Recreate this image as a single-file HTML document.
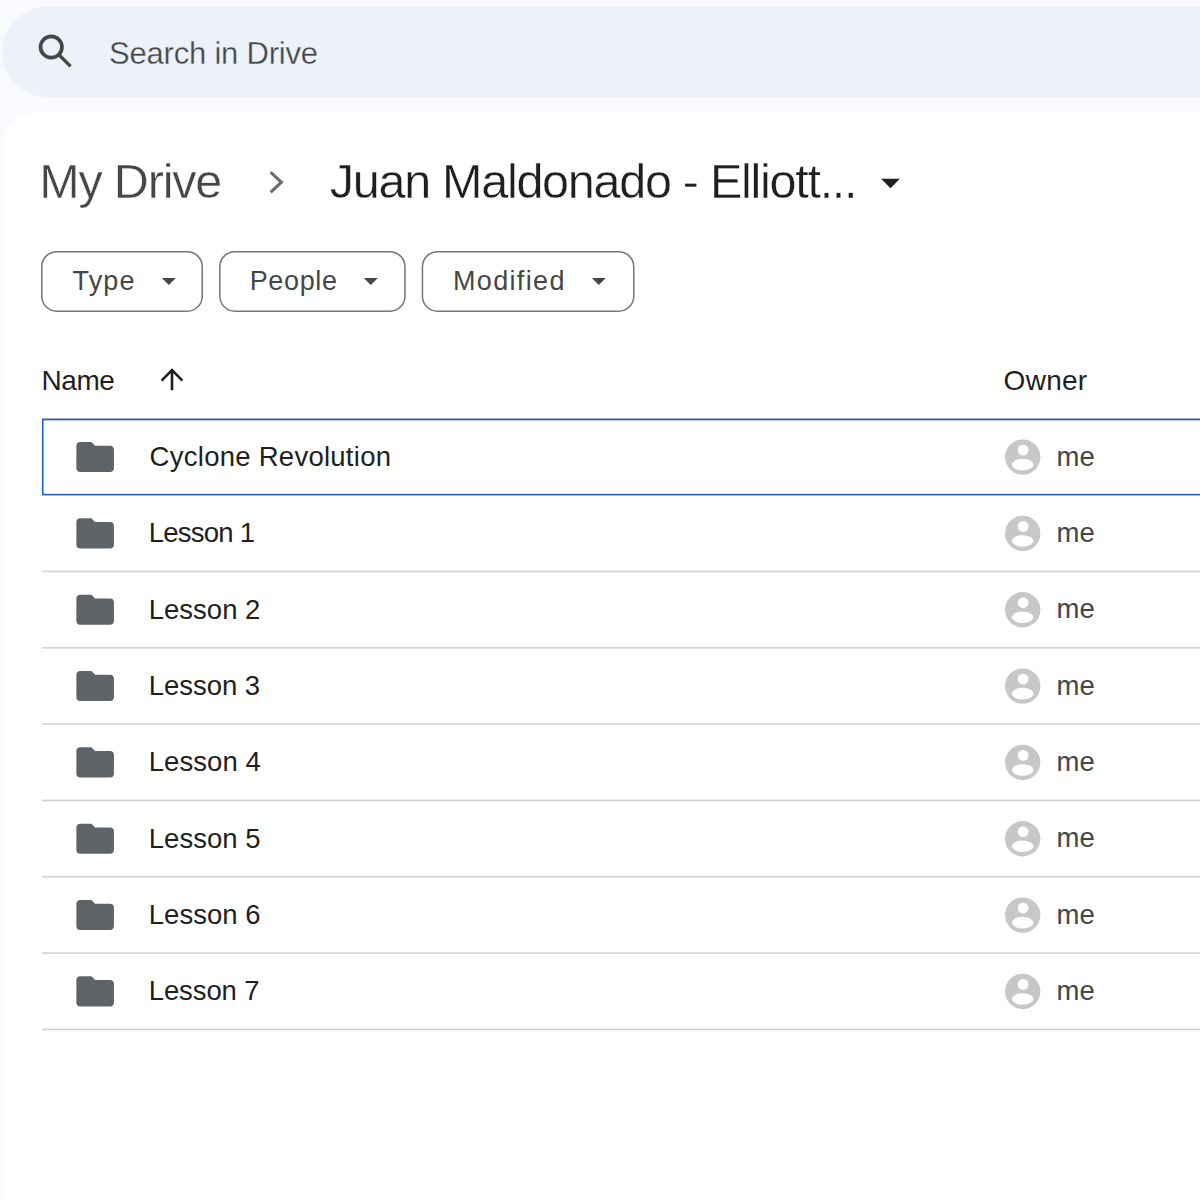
<!DOCTYPE html>
<html><head><meta charset="utf-8">
<style>
html,body{margin:0;padding:0;}
body{width:1200px;height:1200px;overflow:hidden;background:#f8fafd;position:relative;font-family:"Liberation Sans",sans-serif;}
.t{position:absolute;white-space:nowrap;line-height:1;}
.abs{position:absolute;}
</style></head><body>
<div class="abs" style="left:2px;top:7px;width:1300px;height:90px;border-radius:45px;background:#ecf1fa;"></div>
<svg class="abs" style="left:0px;top:0px" width="100" height="100" viewBox="0 0 100 100"><circle cx="51.25" cy="47.0" r="10.7" stroke="#444746" stroke-width="3.7" fill="none"/><path d="M59.2 55.0 L70.6 66.4" stroke="#444746" stroke-width="3.3" fill="none"/></svg>
<div class="t" style="left:109.12px;top:37.86px;font-size:31px;color:#444746;letter-spacing:-0.216px;-webkit-text-stroke:0.3px #ecf1fa;">Search in Drive</div>
<div class="abs" style="left:2.5px;top:113.3px;width:1300px;height:1200px;border-radius:30px 0 0 0;background:#fff;"></div>
<div class="t" style="left:39.30px;top:156.84px;font-size:48.5px;color:#444746;letter-spacing:-1.193px;-webkit-text-stroke:0.4px #fff;">My Drive</div>
<svg class="abs" style="left:250px;top:160px" width="50" height="50" viewBox="250 160 50 50"><path d="M270.6 172.2 L281.4 182.25 L270.6 192.3" stroke="#6e6e6e" stroke-width="3.1" fill="none" stroke-linejoin="miter"/></svg>
<div class="t" style="left:329.75px;top:156.94px;font-size:48.5px;color:#1f1f1f;letter-spacing:-1.269px;-webkit-text-stroke:0.4px #fff;">Juan Maldonado - Elliott...</div>
<svg class="abs" style="left:868px;top:160px" width="45" height="45" viewBox="0 0 24 24"><path fill="#1f1f1f" d="M7 10l5 5 5-5z"/></svg>
<div class="t" style="left:72.62px;top:267.94px;font-size:27px;color:#444746;letter-spacing:1.083px;">Type</div>
<svg class="abs" style="left:151.95px;top:264.10px" width="33.6" height="33.6" viewBox="0 0 24 24"><path fill="#444746" d="M7 10l5 5 5-5z"/></svg>
<div class="t" style="left:249.75px;top:267.94px;font-size:27px;color:#444746;letter-spacing:0.615px;">People</div>
<svg class="abs" style="left:353.90px;top:264.10px" width="33.6" height="33.6" viewBox="0 0 24 24"><path fill="#444746" d="M7 10l5 5 5-5z"/></svg>
<div class="t" style="left:453.00px;top:267.94px;font-size:27px;color:#444746;letter-spacing:1.336px;">Modified</div>
<svg class="abs" style="left:581.50px;top:264.10px" width="33.6" height="33.6" viewBox="0 0 24 24"><path fill="#444746" d="M7 10l5 5 5-5z"/></svg>
<div class="t" style="left:41.45px;top:367.20px;font-size:28px;color:#1f1f1f;letter-spacing:-0.417px;">Name</div>
<svg class="abs" style="left:150px;top:360px" width="40" height="40" viewBox="150 360 40 40"><path d="M161.6 380.6 L172 370.2 L182.4 380.6 M172 370.2 V390.3" stroke="#1f1f1f" stroke-width="2.6" fill="none"/></svg>
<div class="t" style="left:1003.62px;top:366.90px;font-size:28px;color:#1f1f1f;letter-spacing:0.269px;">Owner</div>
<div class="abs" style="left:42px;top:417.7px;width:1300px;height:1.3px;background:#cfcfcf;"></div>
<svg class="abs" style="left:0px;top:413.33px" width="1200" height="86.33"><rect x="42.75" y="6.55" width="1300" height="75.08" fill="none" stroke="#1f5fd6" stroke-width="1.6"/></svg>
<div class="t" style="left:149.62px;top:443.02px;font-size:27.5px;color:#1f1f1f;letter-spacing:0.262px;">Cyclone Revolution</div>
<div class="t" style="left:1056.42px;top:442.52px;font-size:27.5px;color:#444746;letter-spacing:0.175px;">me</div>
<svg class="abs" style="left:0px;top:568px" width="1200" height="6"><rect x="42" y="2.60" width="1200" height="1.7" fill="#d4d4d4"/></svg>
<div class="t" style="left:148.75px;top:519.35px;font-size:27.5px;color:#1f1f1f;letter-spacing:-0.768px;">Lesson 1</div>
<div class="t" style="left:1056.42px;top:518.85px;font-size:27.5px;color:#444746;letter-spacing:0.175px;">me</div>
<svg class="abs" style="left:0px;top:644px" width="1200" height="6"><rect x="42" y="2.93" width="1200" height="1.7" fill="#d4d4d4"/></svg>
<div class="t" style="left:148.75px;top:595.68px;font-size:27.5px;color:#1f1f1f;letter-spacing:0.000px;">Lesson 2</div>
<div class="t" style="left:1056.42px;top:595.18px;font-size:27.5px;color:#444746;letter-spacing:0.175px;">me</div>
<svg class="abs" style="left:0px;top:721px" width="1200" height="6"><rect x="42" y="2.26" width="1200" height="1.7" fill="#d4d4d4"/></svg>
<div class="t" style="left:148.75px;top:672.02px;font-size:27.5px;color:#1f1f1f;letter-spacing:-0.036px;">Lesson 3</div>
<div class="t" style="left:1056.42px;top:671.52px;font-size:27.5px;color:#444746;letter-spacing:0.175px;">me</div>
<svg class="abs" style="left:0px;top:797px" width="1200" height="6"><rect x="42" y="2.60" width="1200" height="1.7" fill="#d4d4d4"/></svg>
<div class="t" style="left:148.75px;top:748.35px;font-size:27.5px;color:#1f1f1f;letter-spacing:0.054px;">Lesson 4</div>
<div class="t" style="left:1056.42px;top:747.85px;font-size:27.5px;color:#444746;letter-spacing:0.175px;">me</div>
<svg class="abs" style="left:0px;top:873px" width="1200" height="6"><rect x="42" y="2.93" width="1200" height="1.7" fill="#d4d4d4"/></svg>
<div class="t" style="left:148.75px;top:824.68px;font-size:27.5px;color:#1f1f1f;letter-spacing:0.021px;">Lesson 5</div>
<div class="t" style="left:1056.42px;top:824.18px;font-size:27.5px;color:#444746;letter-spacing:0.175px;">me</div>
<svg class="abs" style="left:0px;top:950px" width="1200" height="6"><rect x="42" y="2.26" width="1200" height="1.7" fill="#d4d4d4"/></svg>
<div class="t" style="left:148.75px;top:901.02px;font-size:27.5px;color:#1f1f1f;letter-spacing:0.021px;">Lesson 6</div>
<div class="t" style="left:1056.42px;top:900.52px;font-size:27.5px;color:#444746;letter-spacing:0.175px;">me</div>
<svg class="abs" style="left:0px;top:1026px" width="1200" height="6"><rect x="42" y="2.59" width="1200" height="1.7" fill="#d4d4d4"/></svg>
<div class="t" style="left:148.75px;top:977.35px;font-size:27.5px;color:#1f1f1f;letter-spacing:-0.107px;">Lesson 7</div>
<div class="t" style="left:1056.42px;top:976.85px;font-size:27.5px;color:#444746;letter-spacing:0.175px;">me</div>
<svg class="abs" style="left:0;top:0" width="1200" height="1200"><rect x="41.75" y="251.75" width="160.50" height="59.4" rx="15" fill="none" stroke="#747775" stroke-width="1.5"/><rect x="219.85" y="251.75" width="185.10" height="59.4" rx="15" fill="none" stroke="#747775" stroke-width="1.5"/><rect x="422.45" y="251.75" width="211.30" height="59.4" rx="15" fill="none" stroke="#747775" stroke-width="1.5"/><path transform="translate(72.6 434.50) scale(1.879)" fill="#5f6368" d="M10 4H4c-1.1 0-1.99.9-1.99 2L2 18c0 1.1.9 2 2 2h16c1.1 0 2-.9 2-2V8c0-1.1-.9-2-2-2h-8l-2-2z"/><g transform="translate(1004 438.10)"><circle cx="18.7" cy="19" r="17.7" fill="#c7c7c7"/><circle cx="19.1" cy="12.0" r="5.4" fill="#fff"/><ellipse cx="18.7" cy="26.5" rx="10.8" ry="5.8" fill="#fff"/></g><path transform="translate(72.6 510.83) scale(1.879)" fill="#5f6368" d="M10 4H4c-1.1 0-1.99.9-1.99 2L2 18c0 1.1.9 2 2 2h16c1.1 0 2-.9 2-2V8c0-1.1-.9-2-2-2h-8l-2-2z"/><g transform="translate(1004 514.43)"><circle cx="18.7" cy="19" r="17.7" fill="#c7c7c7"/><circle cx="19.1" cy="12.0" r="5.4" fill="#fff"/><ellipse cx="18.7" cy="26.5" rx="10.8" ry="5.8" fill="#fff"/></g><path transform="translate(72.6 587.16) scale(1.879)" fill="#5f6368" d="M10 4H4c-1.1 0-1.99.9-1.99 2L2 18c0 1.1.9 2 2 2h16c1.1 0 2-.9 2-2V8c0-1.1-.9-2-2-2h-8l-2-2z"/><g transform="translate(1004 590.76)"><circle cx="18.7" cy="19" r="17.7" fill="#c7c7c7"/><circle cx="19.1" cy="12.0" r="5.4" fill="#fff"/><ellipse cx="18.7" cy="26.5" rx="10.8" ry="5.8" fill="#fff"/></g><path transform="translate(72.6 663.50) scale(1.879)" fill="#5f6368" d="M10 4H4c-1.1 0-1.99.9-1.99 2L2 18c0 1.1.9 2 2 2h16c1.1 0 2-.9 2-2V8c0-1.1-.9-2-2-2h-8l-2-2z"/><g transform="translate(1004 667.10)"><circle cx="18.7" cy="19" r="17.7" fill="#c7c7c7"/><circle cx="19.1" cy="12.0" r="5.4" fill="#fff"/><ellipse cx="18.7" cy="26.5" rx="10.8" ry="5.8" fill="#fff"/></g><path transform="translate(72.6 739.83) scale(1.879)" fill="#5f6368" d="M10 4H4c-1.1 0-1.99.9-1.99 2L2 18c0 1.1.9 2 2 2h16c1.1 0 2-.9 2-2V8c0-1.1-.9-2-2-2h-8l-2-2z"/><g transform="translate(1004 743.43)"><circle cx="18.7" cy="19" r="17.7" fill="#c7c7c7"/><circle cx="19.1" cy="12.0" r="5.4" fill="#fff"/><ellipse cx="18.7" cy="26.5" rx="10.8" ry="5.8" fill="#fff"/></g><path transform="translate(72.6 816.16) scale(1.879)" fill="#5f6368" d="M10 4H4c-1.1 0-1.99.9-1.99 2L2 18c0 1.1.9 2 2 2h16c1.1 0 2-.9 2-2V8c0-1.1-.9-2-2-2h-8l-2-2z"/><g transform="translate(1004 819.76)"><circle cx="18.7" cy="19" r="17.7" fill="#c7c7c7"/><circle cx="19.1" cy="12.0" r="5.4" fill="#fff"/><ellipse cx="18.7" cy="26.5" rx="10.8" ry="5.8" fill="#fff"/></g><path transform="translate(72.6 892.49) scale(1.879)" fill="#5f6368" d="M10 4H4c-1.1 0-1.99.9-1.99 2L2 18c0 1.1.9 2 2 2h16c1.1 0 2-.9 2-2V8c0-1.1-.9-2-2-2h-8l-2-2z"/><g transform="translate(1004 896.09)"><circle cx="18.7" cy="19" r="17.7" fill="#c7c7c7"/><circle cx="19.1" cy="12.0" r="5.4" fill="#fff"/><ellipse cx="18.7" cy="26.5" rx="10.8" ry="5.8" fill="#fff"/></g><path transform="translate(72.6 968.83) scale(1.879)" fill="#5f6368" d="M10 4H4c-1.1 0-1.99.9-1.99 2L2 18c0 1.1.9 2 2 2h16c1.1 0 2-.9 2-2V8c0-1.1-.9-2-2-2h-8l-2-2z"/><g transform="translate(1004 972.43)"><circle cx="18.7" cy="19" r="17.7" fill="#c7c7c7"/><circle cx="19.1" cy="12.0" r="5.4" fill="#fff"/><ellipse cx="18.7" cy="26.5" rx="10.8" ry="5.8" fill="#fff"/></g></svg>
</body></html>
